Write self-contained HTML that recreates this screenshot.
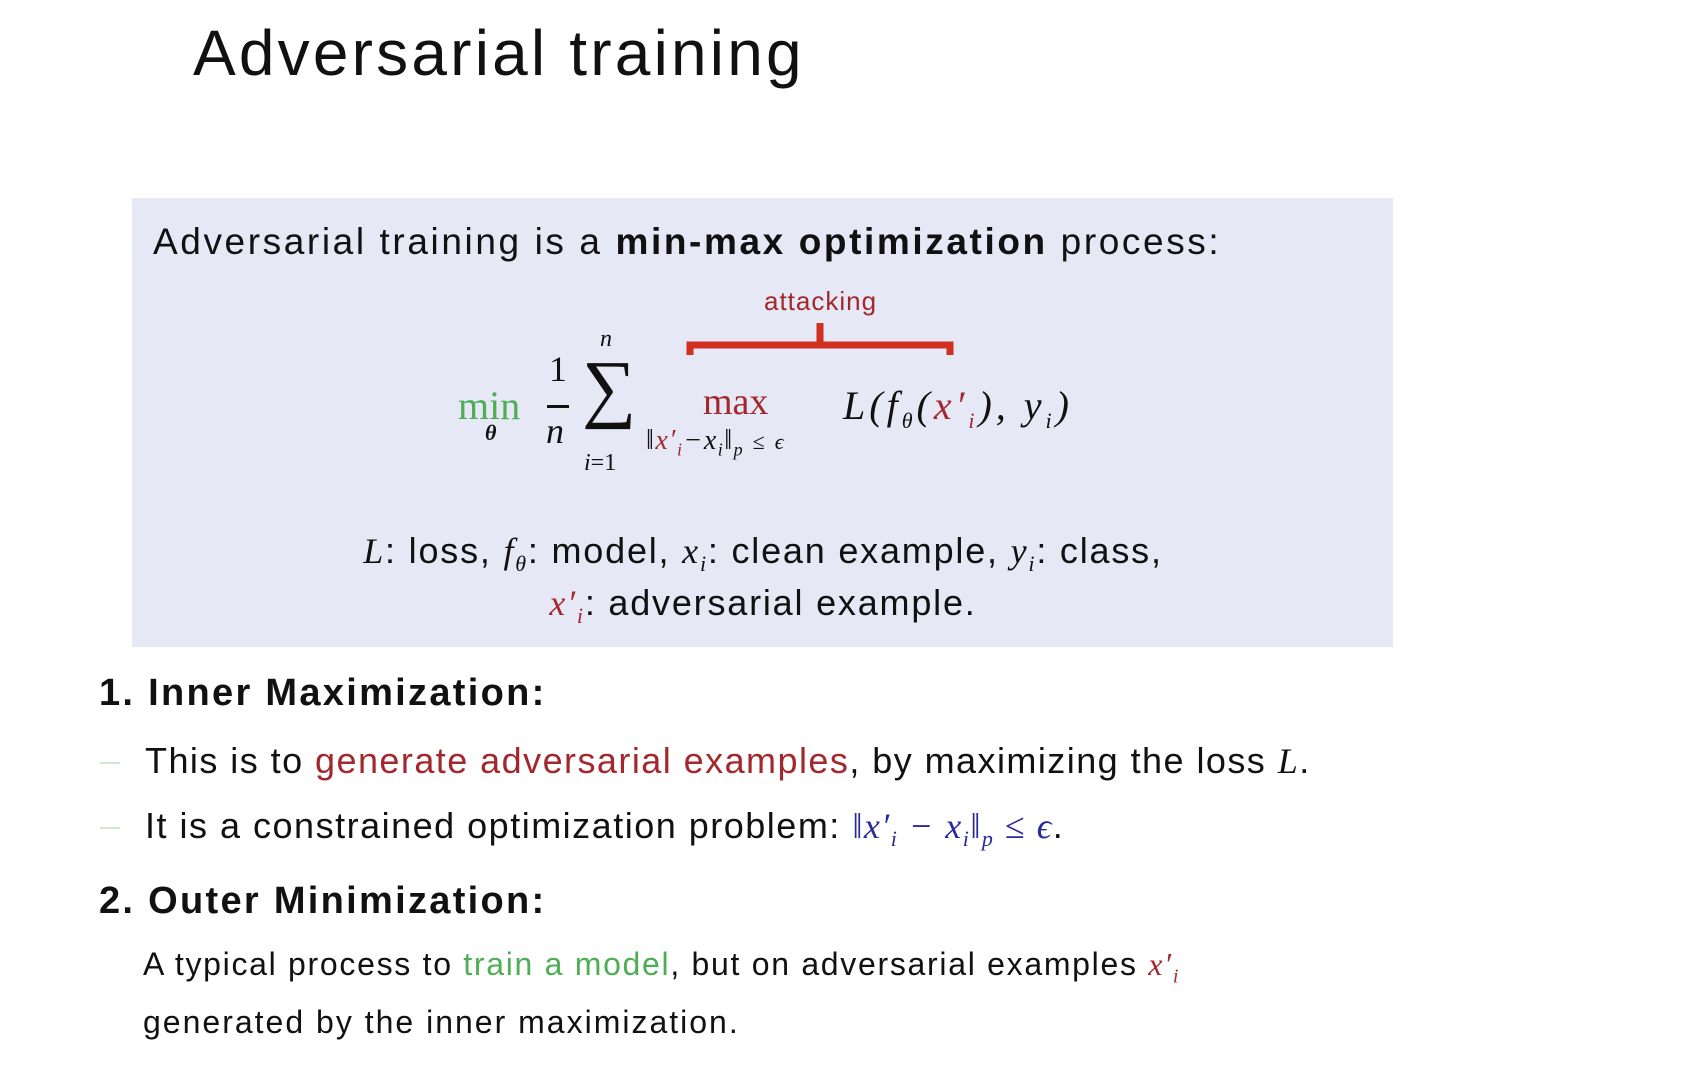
<!DOCTYPE html>
<html><head><meta charset="utf-8"><style>
body{margin:0;width:1688px;height:1080px;background:#fff;position:relative;overflow:hidden;font-family:"Liberation Sans",sans-serif;color:#111}
.a{position:absolute;white-space:nowrap}
.s{font-family:"Liberation Serif",serif}
.i{font-style:italic}
.red{color:#a3282e}.grn{color:#4fae55}.blu{color:#2a2a9a}
</style></head><body>
<div class="a" style="left:193px;top:16px;font-size:64px;letter-spacing:3.2px;">Adversarial training</div>
<div class="a" style="left:132px;top:198px;width:1261px;height:449px;background:#e6e8f5"></div>
<div class="a" style="left:153px;top:221px;font-size:37px;letter-spacing:2.6px">Adversarial training is a <b>min-max optimization</b> process:</div>
<div class="a red" style="left:764px;top:286px;font-size:26px;letter-spacing:1px">attacking</div>
<svg class="a" style="left:680px;top:315px" width="280" height="45"><path d="M10 40 V30 H140 V8 M140 30 H270 V40" fill="none" stroke="#d0301f" stroke-width="7"/></svg>
<div class="a s grn" style="left:458px;top:382px;font-size:40px">min</div>
<div class="a s i" style="left:485px;top:420px;font-size:22px;font-weight:bold">θ</div>
<div class="a s" style="left:549px;top:348px;font-size:36px">1</div>
<div class="a" style="left:547px;top:405px;width:22px;height:3px;background:#111"></div>
<div class="a s i" style="left:546px;top:410px;font-size:36px">n</div>
<div class="a s" style="left:582px;top:350px;font-size:76px;line-height:1">∑</div>
<div class="a s i" style="left:600px;top:326px;font-size:24px">n</div>
<div class="a s" style="left:584px;top:450px;font-size:24px"><i>i</i>=1</div>
<div class="a s red" style="left:703px;top:380px;font-size:38px">max</div>
<div class="a s i" style="left:646px;top:425px;font-size:28px;letter-spacing:1.5px">‖<span class="red">x′<sub style="font-size:18px">i</sub></span>−x<sub style="font-size:18px">i</sub>‖<sub style="font-size:18px">p</sub> <span style="font-style:normal;font-size:22px">≤</span> <span style="font-size:22px">ϵ</span></div>
<div class="a s i" style="left:843px;top:382px;font-size:40px;letter-spacing:4px">L(f<sub style="font-size:22px">θ</sub>(<span class="red">x′<sub style="font-size:22px">i</sub></span>), y<sub style="font-size:22px">i</sub>)</div>
<div class="a" style="left:0;width:1526px;text-align:center;top:530px;font-size:36px;letter-spacing:1.8px"><i class="s">L</i>: loss, <i class="s">f<sub style="font-size:22px">θ</sub></i>: model, <i class="s">x<sub style="font-size:22px">i</sub></i>: clean example, <i class="s">y<sub style="font-size:22px">i</sub></i>: class,</div>
<div class="a" style="left:0;width:1526px;text-align:center;top:582px;font-size:36px;letter-spacing:1.8px"><i class="s red">x′<sub style="font-size:22px">i</sub></i>: adversarial example.</div>
<div class="a" style="left:99px;top:672px;font-size:38px;font-weight:bold;letter-spacing:2.3px">1. Inner Maximization:</div>
<div class="a" style="left:100px;top:762px;width:20px;height:2px;background:#cfe8cf"></div>
<div class="a" style="left:145px;top:740px;font-size:36px;letter-spacing:1.45px">This is to <span class="red">generate adversarial examples</span>, by maximizing the loss <i class="s">L</i>.</div>
<div class="a" style="left:100px;top:827px;width:20px;height:2px;background:#cfe8cf"></div>
<div class="a" style="left:145px;top:805px;font-size:36px;letter-spacing:1.5px">It is a constrained optimization problem: <span class="s i blu">‖x′<sub style="font-size:22px">i</sub> − x<sub style="font-size:22px">i</sub>‖<sub style="font-size:22px">p</sub> <span style="font-style:normal">≤</span> ϵ</span>.</div>
<div class="a" style="left:99px;top:880px;font-size:38px;font-weight:bold;letter-spacing:2.3px">2. Outer Minimization:</div>
<div class="a" style="left:143px;top:946px;font-size:32px;letter-spacing:1.7px">A typical process to <span class="grn">train a model</span>, but on adversarial examples <i class="s red">x′<sub style="font-size:20px">i</sub></i></div>
<div class="a" style="left:143px;top:1004px;font-size:32px;letter-spacing:2px">generated by the inner maximization.</div>
</body></html>
